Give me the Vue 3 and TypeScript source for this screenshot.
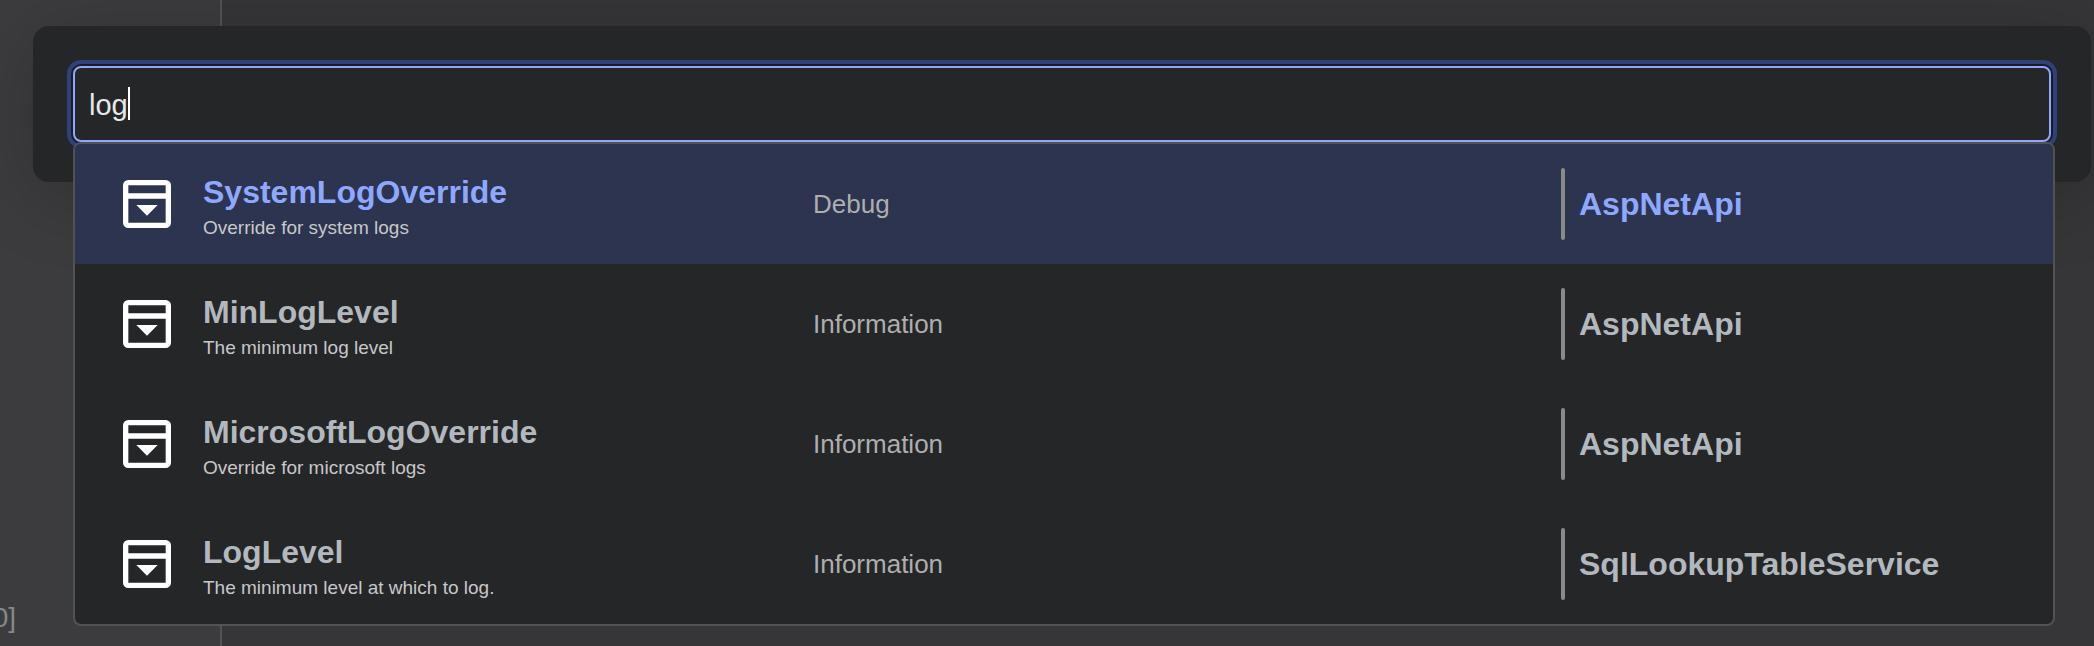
<script setup lang="ts">
import { nextTick, onMounted, ref } from 'vue'

interface Entry {
  name: string
  description: string
  value: string
  service: string
}

const query = ref('log')
const active = ref(0)
const caretX = ref(0)
const box = ref<HTMLInputElement | null>(null)

const entries: Entry[] = [
  { name: 'SystemLogOverride', description: 'Override for system logs', value: 'Debug', service: 'AspNetApi' },
  { name: 'MinLogLevel', description: 'The minimum log level', value: 'Information', service: 'AspNetApi' },
  { name: 'MicrosoftLogOverride', description: 'Override for microsoft logs', value: 'Information', service: 'AspNetApi' },
  { name: 'LogLevel', description: 'The minimum level at which to log.', value: 'Information', service: 'SqlLookupTableService' },
]

// Places the drawn caret after the text that precedes the insertion point
function placeCaret() {
  const field = box.value
  const context = document.createElement('canvas').getContext('2d')
  if (!field || !context) return
  const style = getComputedStyle(field)
  context.font = `${style.fontSize} ${style.fontFamily}`
  const before = field.value.slice(0, field.selectionStart ?? field.value.length)
  const start = parseFloat(style.paddingLeft) + parseFloat(style.borderLeftWidth)
  caretX.value = Math.round(start + context.measureText(before).width) - field.scrollLeft
}

onMounted(async () => {
  await nextTick()
  box.value?.focus()
  box.value?.setSelectionRange(query.value.length, query.value.length)
  placeCaret()
})
</script>

<template>
  <div class="page">
    <aside class="side"><span class="count">0]</span></aside>
    <div class="main"></div>

    <section class="dialog" role="dialog" aria-label="Search settings">
      <div class="search">
        <input
          ref="box"
          v-model="query"
          class="field"
          type="text"
          aria-label="Search"
          autocomplete="off"
          spellcheck="false"
          @input="placeCaret"
          @keyup="placeCaret"
          @click="placeCaret"
        />
        <span class="caret" :style="{ left: caretX + 'px' }"></span>
        <ul class="results" role="listbox" aria-label="Results">
          <li
            v-for="(entry, index) in entries"
            :key="entry.name"
            class="row"
            :class="{ active: index === active }"
            role="option"
            :aria-selected="index === active"
            @mouseenter="active = index"
          >
            <div class="setting">
              <svg class="icon" viewBox="0 0 18 18" aria-hidden="true">
                <path
                  fill="currentColor"
                  fill-rule="evenodd"
                  d="M2 0H16A2 2 0 0 1 18 2V16A2 2 0 0 1 16 18H2A2 2 0 0 1 0 16V2A2 2 0 0 1 2 0ZM2 2V5H16V2ZM2 7V16H16V7ZM5 9.400H13L9 13.400Z"
                />
              </svg>
              <div class="label">
                <span class="name">{{ entry.name }}</span>
                <span class="description">{{ entry.description }}</span>
              </div>
            </div>
            <span class="value">{{ entry.value }}</span>
            <div class="service">
              <span class="bar"></span>
              <span class="name">{{ entry.service }}</span>
            </div>
          </li>
        </ul>
      </div>
    </section>
  </div>
</template>

<style>
html,
body {
  background: #363638;
}

body {
  margin: 0;
}
</style>

<style scoped>
.page {
  position: relative;
  display: flex;
  box-sizing: border-box;
  min-height: 100vh;
  overflow: hidden;
  color: #fff;
  font-family: "Liberation Sans", Arial, Helvetica, sans-serif;
}

.side {
  display: flex;
  align-items: flex-end;
  box-sizing: border-box;
  width: 222px;
  padding-bottom: 12px;
  border-right: 2px solid #525355;
  background: #3c3c3e;
}

.count {
  display: flex;
  justify-content: flex-end;
  width: 16px;
  color: #85888c;
  font-size: 28px;
  line-height: 32px;
}

.main {
  flex: 1;
  background: #363638;
}

/* Floats over the page behind it */
.dialog {
  position: absolute;
  top: 26px;
  right: 3px;
  left: 33px;
  box-sizing: border-box;
  padding: 40px;
  border-radius: 16px;
  background: #252628;
  box-shadow: 0 12px 80px rgba(0, 0, 0, 0.2);
}

.search {
  position: relative;
}

.field {
  display: block;
  box-sizing: border-box;
  width: 100%;
  height: 76px;
  padding: 2px 14px 0;
  border: 2px solid #8fa8ff;
  border-radius: 8px;
  outline: none;
  background: #252628;
  color: #e8e8ea;
  caret-color: transparent;
  font-family: inherit;
  font-size: 29px;
  box-shadow: 0 0 0 2px #1c1b22, 0 0 0 6px #304078;
}

.caret {
  position: absolute;
  top: 21px;
  width: 2px;
  height: 33px;
  background: #fff;
  pointer-events: none;
}

.results {
  position: absolute;
  top: 100%;
  right: -4px;
  left: 0;
  margin: 0;
  padding: 0;
  overflow: hidden;
  border: 2px solid #515254;
  border-radius: 8px;
  background: #252628;
  list-style: none;
}

.row {
  display: grid;
  grid-template-columns: 690fr 748fr 468fr;
  align-items: center;
  height: 120px;
  padding: 0 24px 0 48px;
}

.row.active {
  background: #2c3450;
}

.setting,
.service {
  display: flex;
  align-items: center;
}

.setting {
  gap: 32px;
}

.service {
  gap: 14px;
}

.icon {
  width: 48px;
  height: 48px;
}

.label {
  display: flex;
  flex-direction: column;
  padding-top: 8px;
}

.name {
  color: #b2b8bd;
  font-size: 32px;
  font-weight: 700;
  line-height: 40px;
}

.active .name {
  color: #8fa8ff;
}

.description {
  color: #c8c8c8;
  font-size: 19px;
  line-height: 32px;
}

.value {
  color: #aeaeae;
  font-size: 26px;
  line-height: 32px;
}

.bar {
  width: 4px;
  height: 72px;
  border-radius: 2px;
  background: #8a8a8b;
}
</style>
